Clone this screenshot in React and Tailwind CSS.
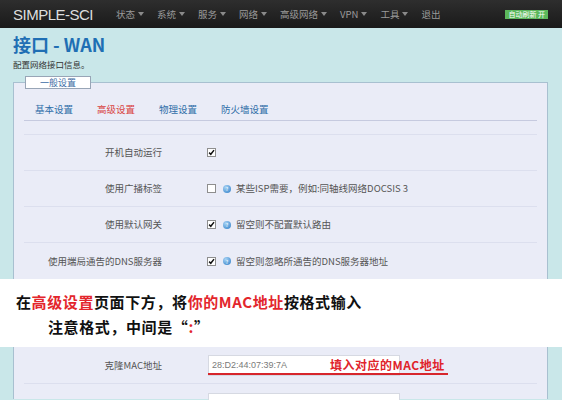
import React from 'react';

// top menu of the router page
const navItems = [
    { label: '状态', drop: true },
    { label: '系统', drop: true },
    { label: '服务', drop: true },
    { label: '网络', drop: true },
    { label: '高级网络', drop: true },
    { label: 'VPN', drop: true },
    { label: '工具', drop: true },
    { label: '退出', drop: false },
];

const tabs = [
    { label: '基本设置', active: false },
    { label: '高级设置', active: true },
    { label: '物理设置', active: false },
    { label: '防火墙设置', active: false },
];

const rows = [
    { label: '开机自动运行', checked: true },
    { label: '使用广播标签', checked: false, help: '某些ISP需要，例如:同轴线网络DOCSIS 3' },
    { label: '使用默认网关', checked: true, help: '留空则不配置默认路由' },
    { label: '使用端局通告的DNS服务器', checked: true, help: '留空则忽略所通告的DNS服务器地址' },
];

const Caret = () => (
    <svg width="6" height="4" viewBox="0 0 6 4" className="ml-[3px]">
        <path d="M0 0h6L3 4z" fill="#8a8a8a" />
    </svg>
);

const CheckBox = ({ checked }) => (
    <span className="w-[9px] h-[9px] border border-[#8e8e8e] bg-white flex items-center justify-center shrink-0">
        {checked && (
            <svg width="9" height="9" viewBox="0 0 10 10">
                <path d="M1.6 5.2 4 7.6 8.6 1.6" stroke="#111" strokeWidth="2.1" fill="none" />
            </svg>
        )}
    </span>
);

const HelpIcon = () => (
    <span className="ml-[7px] w-[8px] h-[8px] rounded-full bg-[radial-gradient(circle_at_35%_30%,#a9d4f5,#2b7cc6)] flex items-center justify-center text-white text-[5px] leading-none shrink-0">?</span>
);

const SettingRow = ({ row }) => (
    <div className="flex items-center h-[36px] border-b border-[#dcdfee] last:border-b-0">
        <div className="w-[138px] text-right text-[9.5px] text-[#555]">{row.label}</div>
        <div className="ml-[45px] flex items-center">
            <CheckBox checked={row.checked} />
            {row.help && (
                <>
                    <HelpIcon />
                    <span className="ml-[5px] text-[9.5px] text-[#555]">{row.help}</span>
                </>
            )}
        </div>
    </div>
);

export default function App() {
    return (
        <div className="w-[562px] h-[400px] overflow-hidden bg-[#c9e7e9] [font-family:'Noto_Sans_CJK_SC',sans-serif]">
            {/* Navbar */}
            <nav className="h-[28px] bg-gradient-to-b from-[#2e2e2e] to-[#1a1a1a] flex items-center pl-[13px] pr-[14px]">
                <span className="text-[15px] tracking-[-0.5px] text-[#dedede] leading-none [font-family:'Liberation_Sans',sans-serif]">SIMPLE-SCI</span>
                <ul className="flex items-center ml-[23px] gap-[13px]">
                    {navItems.map(item => (
                        <li key={item.label} className="flex items-center text-[9.5px] text-[#9a9a9a]">
                            {item.label}
                            {item.drop && <Caret />}
                        </li>
                    ))}
                </ul>
                <span className="ml-auto h-[9px] px-[3px] bg-[#5cb85c] text-white text-[7px] leading-[9px] flex items-center">自动刷新 开</span>
            </nav>

            {/* Heading + fieldset, upper part */}
            <div className="pl-[13px] pr-[14px] pt-[3px]">
                <h1 className="text-[18px] leading-[27px] font-bold text-[#1f6fb4]">接口 - WAN</h1>
                <p className="text-[8.5px] leading-[13px] text-[#333]">配置网络接口信息。</p>

                <fieldset className="mt-[5px] min-w-0 border border-b-0 border-[#a8c0d0] bg-[#eaecf7] px-[10px]">
                    <legend className="ml-[1px] w-[66px] h-[13px] bg-white border border-[#98a5b6]">
                        <span className="block w-full text-center text-[9px] leading-[11px] text-[#3d6ca3]">一般设置</span>
                    </legend>

                    <div className="mt-[13px] flex gap-[24px] pl-[11px] pb-[4px] border-b border-[#c6cadf] text-[9.5px] leading-[14px]">
                        {tabs.map(tab => (
                            <span key={tab.label} className={tab.active ? 'text-[#d9433f]' : 'text-[#2f6ea8]'}>{tab.label}</span>
                        ))}
                    </div>

                    <div className="mt-[13px] border-t border-[#dcdfee]">
                        {rows.map(row => <SettingRow key={row.label} row={row} />)}
                    </div>
                </fieldset>
            </div>

            {/* Annotation band */}
            <div className="h-[68px] bg-white pt-[10px] text-[15px] leading-[25px] tracking-[0.6px] font-bold text-[#111]">
                <p className="pl-[16px]">
                    在<span className="text-[#e3262c]">高级设置</span>页面下方，将<span className="text-[#e3262c]">你的MAC地址</span>按格式输入
                </p>
                <p className="pl-[48px]">
                    注意格式，中间是“<span className="text-[#e3262c]">:</span>”
                </p>
            </div>

            {/* Fieldset, lower part */}
            <div className="pl-[13px] pr-[14px]">
                <div className="border-x border-[#a8c0d0] bg-[#eaecf7] px-[10px] h-[52px]">
                    <div className="flex items-center h-[37px] border-b border-[#dcdfee]">
                        <div className="w-[138px] text-right text-[9.5px] text-[#555]">克隆MAC地址</div>
                        <div className="ml-[46px] relative">
                            <div className="w-[192px] h-[21px] bg-white border border-[#d6d9e2] pl-[3px] text-[9px] leading-[19px] text-[#7a7a7a] [font-family:'Liberation_Sans',sans-serif]">28:D2:44:07:39:7A</div>
                            <span className="absolute left-[122px] top-[3px] whitespace-nowrap text-[12px] leading-[14px] font-bold tracking-[0.5px] text-[#e0242b]">填入对应的MAC地址</span>
                            <span className="absolute left-0 top-[18px] w-[240px] h-[2px] bg-[#d7262c]" />
                        </div>
                    </div>
                    <div className="pt-[9px] pl-[184px]">
                        <div className="w-[192px] h-[21px] bg-white border border-[#d6d9e2]" />
                    </div>
                </div>
            </div>
        </div>
    );
}
